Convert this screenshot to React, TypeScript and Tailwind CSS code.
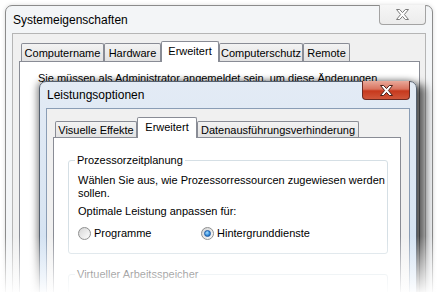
import React from 'react';

const CloseGlyph = ({ fill, stroke }: { fill: string; stroke: string }) => (
  <svg width="13" height="11" viewBox="0 0 13 11">
    <path
      d="M0.5 0.5h3.2L6.5 3.6 9.3 0.5h3.2L8.4 5.5l4.1 5H9.3L6.5 7.4 3.7 10.5H0.5l4.1-5z"
      fill={fill}
      stroke={stroke}
      strokeWidth="1"
      strokeLinejoin="round"
    />
  </svg>
);

const Tab = ({
  label,
  active,
  className,
}: {
  label: string;
  active?: boolean;
  className: string;
}) => (
  <div
    className={
      active
        ? `relative z-10 -mb-px flex items-center justify-center rounded-t-[2px] border border-b-0 border-[#898c95] bg-white pb-[2px] ${className}`
        : `flex items-center justify-center rounded-t-[2px] border border-b-0 border-[#898c95] bg-gradient-to-b from-[#f3f3f3] to-[#e2e2e2] ${className}`
    }
  >
    <span className="whitespace-nowrap">{label}</span>
  </div>
);

const Radio = ({ checked }: { checked?: boolean }) => (
  <div className="flex h-[13px] w-[13px] shrink-0 items-center justify-center rounded-full border border-[#8e8f8f] bg-gradient-to-br from-[#d4d4d4] to-[#fafafa]">
    {checked ? (
      <div className="h-[7px] w-[7px] rounded-full border border-[#1b5aa6] bg-[radial-gradient(circle_at_40%_35%,#a6dcff,#3a93df_55%,#0f4f98)]" />
    ) : (
      <div className="h-[9px] w-[9px] rounded-full bg-gradient-to-br from-[#dadada] to-[#fbfbfb]" />
    )}
  </div>
);

export default function App() {
  return (
    <div className="relative h-[292px] w-[440px] overflow-hidden bg-white font-['Liberation_Sans',Arial,sans-serif] text-[11px] leading-[14px] text-black">
      {/* Systemeigenschaften (inactive, behind) */}
      <div className="absolute left-[5px] top-[5px] flex h-[300px] w-[428px] flex-col rounded-t-[7px] border border-[#8b8b8b] bg-[#f3f5f7] px-[6px] shadow-[0_0_4px_rgba(0,0,0,0.15)]">
        <div className="flex h-[27px] shrink-0 items-start justify-between">
          <span className="ml-px mt-[7px] text-[12px] leading-[14px]">Systemeigenschaften</span>
          <div className="-mt-px flex h-[20px] w-[47px] items-center justify-center rounded-b-[4px] border border-t-0 border-[#a3a3a3] bg-gradient-to-b from-[#f6f6f6] to-[#ececec]">
            <CloseGlyph fill="#ffffff" stroke="#7c7c7c" />
          </div>
        </div>
        <div className="flex flex-1 flex-col border border-[#b5b5b5] bg-[#f0f0f0] pl-[6px] pr-[5px] pt-[7px]">
          <div className="ml-[2px] flex h-[20px] shrink-0 items-end">
            <Tab label="Computername" className="h-[18px] w-[83px]" />
            <Tab label="Hardware" className="h-[18px] w-[57px]" />
            <Tab label="Erweitert" active className="h-[21px] w-[58px]" />
            <Tab label="Computerschutz" className="h-[18px] w-[84px]" />
            <Tab label="Remote" className="h-[18px] w-[47px]" />
          </div>
          <div className="flex-1 border border-[#898c95] bg-white pl-[18px] pt-[9px]">
            <p className="whitespace-nowrap">Sie müssen als Administrator angemeldet sein, um diese Änderungen</p>
          </div>
        </div>
      </div>

      {/* Leistungsoptionen (active) */}
      <div className="absolute left-[39px] top-[81px] flex h-[260px] w-[378px] flex-col rounded-t-[7px] border border-[#55606e] bg-gradient-to-b from-[#e3ebf5] via-[#d9e5f2] to-[#c4daf3] px-[6px] shadow-[-2px_0_7px_rgba(0,0,0,0.45),9px_3px_9px_rgba(0,0,0,0.6)]">
        <div className="flex h-[26px] shrink-0 items-start justify-between">
          <span className="ml-px mt-[6px] text-[12px] leading-[14px]">Leistungsoptionen</span>
          <div className="-mt-px flex h-[19px] w-[48px] items-center justify-center rounded-b-[4px] border border-t-0 border-[#6b2a22] bg-[linear-gradient(to_bottom,#e9a99a_0%,#d9735f_45%,#c7391d_55%,#d0563a_100%)]">
            <CloseGlyph fill="#ffffff" stroke="#4a2019" />
          </div>
        </div>
        <div className="flex flex-1 flex-col border border-[#8a9db5] bg-[#f0f0f0] pl-[6px] pr-[8px] pt-[8px]">
          <div className="ml-[2px] flex h-[20px] shrink-0 items-end">
            <Tab label="Visuelle Effekte" className="h-[16px] w-[82px]" />
            <Tab label="Erweitert" active className="h-[21px] w-[60px]" />
            <Tab label="Datenausführungsverhinderung" className="h-[16px] w-[162px]" />
          </div>
          <div className="flex-1 border border-[#898c95] bg-white pl-[14px] pt-[15px]">
            <fieldset className="h-[101px] w-[320px] rounded-[3px] border border-[#d5dfe5]">
              <legend className="ml-[6px] px-[2px]">Prozessorzeitplanung</legend>
              <div className="pl-[9px] pt-[7px] leading-[13px]">
                <p className="whitespace-nowrap">
                  Wählen Sie aus, wie Prozessorressourcen zugewiesen werden
                  <br />
                  sollen.
                </p>
                <p className="mt-[5px]">Optimale Leistung anpassen für:</p>
                <div className="mt-[9px] flex items-center">
                  <label className="flex w-[123px] items-center gap-[3px]">
                    <Radio />
                    <span>Programme</span>
                  </label>
                  <label className="flex items-center gap-[3px]">
                    <Radio checked />
                    <span>Hintergrunddienste</span>
                  </label>
                </div>
              </div>
            </fieldset>
            <fieldset className="mt-[13px] h-[60px] w-[320px] rounded-[3px] border border-[#d5dfe5]">
              <legend className="ml-[6px] px-[2px]">Virtueller Arbeitsspeicher</legend>
            </fieldset>
          </div>
        </div>
      </div>

      {/* bottom fade */}
      <div className="pointer-events-none absolute inset-x-0 bottom-0 h-[56px] bg-[linear-gradient(to_bottom,rgba(255,255,255,0)_0%,rgba(255,255,255,0.62)_65%,rgba(255,255,255,0.94)_100%)]" />
    </div>
  );
}
